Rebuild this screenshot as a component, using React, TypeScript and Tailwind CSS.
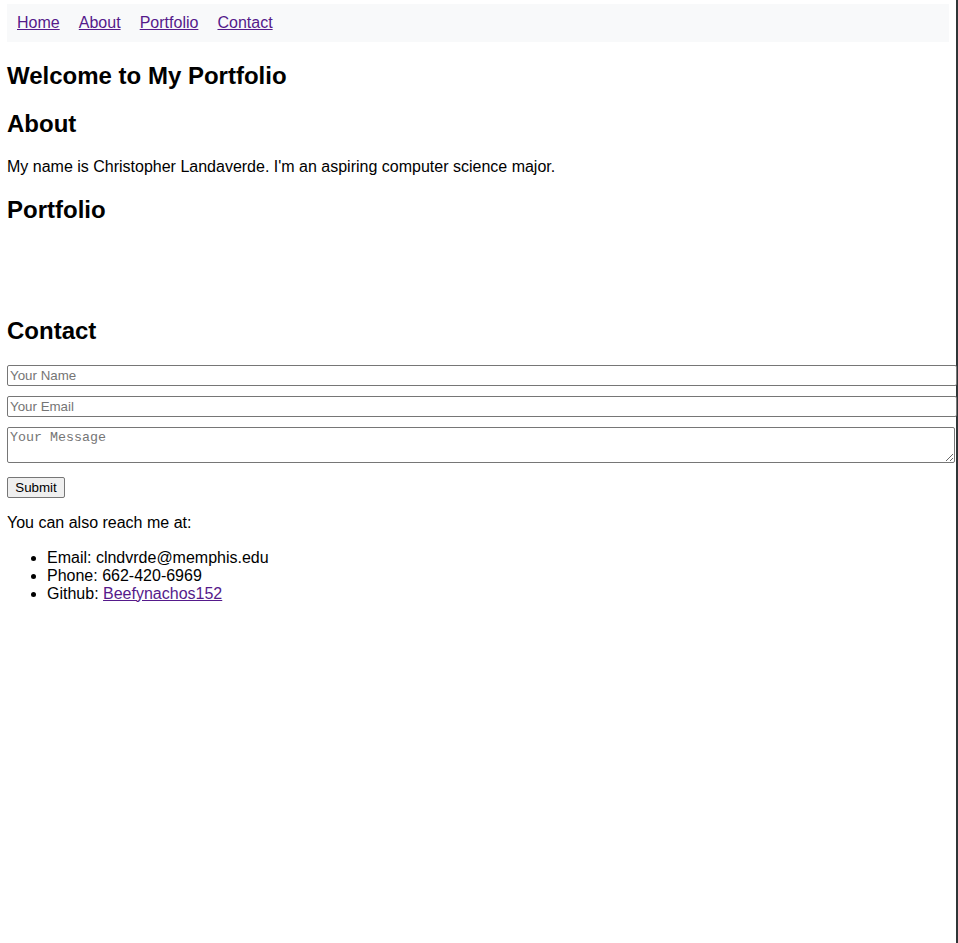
import React from "react";

const links = ["Home", "About", "Portfolio", "Contact"];

const App = () => {
  return (
    <div className="w-[958px] min-h-screen bg-white border-r-2 border-[#2f3537] pt-[4px] pl-[7px] pr-[7px] pb-8 font-['Liberation_Sans',Arial,sans-serif] text-[16px] leading-[18.4px] text-black">
      <nav className="flex gap-[19.1px] bg-[#f8f9fa] p-[10px]">
        {links.map((l) => (
          <a key={l} href={`#${l.toLowerCase()}`} className="text-[#551a8b] underline">
            {l}
          </a>
        ))}
      </nav>

      <h2 className="my-[19.92px] text-[24px] leading-[27.6px] font-bold">Welcome to My Portfolio</h2>

      <section id="about">
        <h2 className="my-[19.92px] text-[24px] leading-[27.6px] font-bold">About</h2>
        <p className="mt-[21px] mb-[16px]">
          My name is Christopher Landaverde. I'm an aspiring computer science major.
        </p>
      </section>

      <section id="portfolio">
        <h2 className="mt-[18.92px] mb-[19.92px] text-[24px] leading-[27.6px] font-bold">Portfolio</h2>
        <div className="h-[53.6px]"></div>
      </section>

      <section id="contact">
        <h2 className="mt-[19.92px] mb-[21px] text-[24px] leading-[27.6px] font-bold">Contact</h2>
        <form onSubmit={(e) => e.preventDefault()}>
          <input
            type="text"
            placeholder="Your Name"
            className="block w-[950px] h-[21px] mb-[10px] px-[2px] py-[1px] border border-[#767676] rounded-[2px] text-[13.33px] placeholder:text-[#757575]"
          />
          <input
            type="email"
            placeholder="Your Email"
            className="block w-[950px] h-[21px] mb-[10px] px-[2px] py-[1px] border border-[#767676] rounded-[2px] text-[13.33px] placeholder:text-[#757575]"
          />
          <textarea
            placeholder="Your Message"
            rows={2}
            className="block w-[948px] h-[36px] mb-[14px] p-[2px] border border-[#767676] rounded-[2px] text-[13.33px] leading-[15px] font-['Liberation_Mono',monospace] placeholder:text-[#757575]"
          ></textarea>
          <button
            type="submit"
            className="block w-[58px] h-[21px] px-[6px] py-[1px] bg-[#efefef] border border-[#767676] rounded-[2px] text-[13.33px] leading-[15px]"
          >
            Submit
          </button>
        </form>
        <p className="my-[16px]">You can also reach me at:</p>
        <ul className="list-disc pl-[40px] mt-[14px] mb-[16px] leading-[18px]">
          <li>Email: clndvrde@memphis.edu</li>
          <li>Phone: 662-420-6969</li>
          <li>
            Github:{" "}
            <a href="https://github.com/Beefynachos152" className="text-[#551a8b] underline">
              Beefynachos152
            </a>
          </li>
        </ul>
      </section>
    </div>
  );
};

export default App;
